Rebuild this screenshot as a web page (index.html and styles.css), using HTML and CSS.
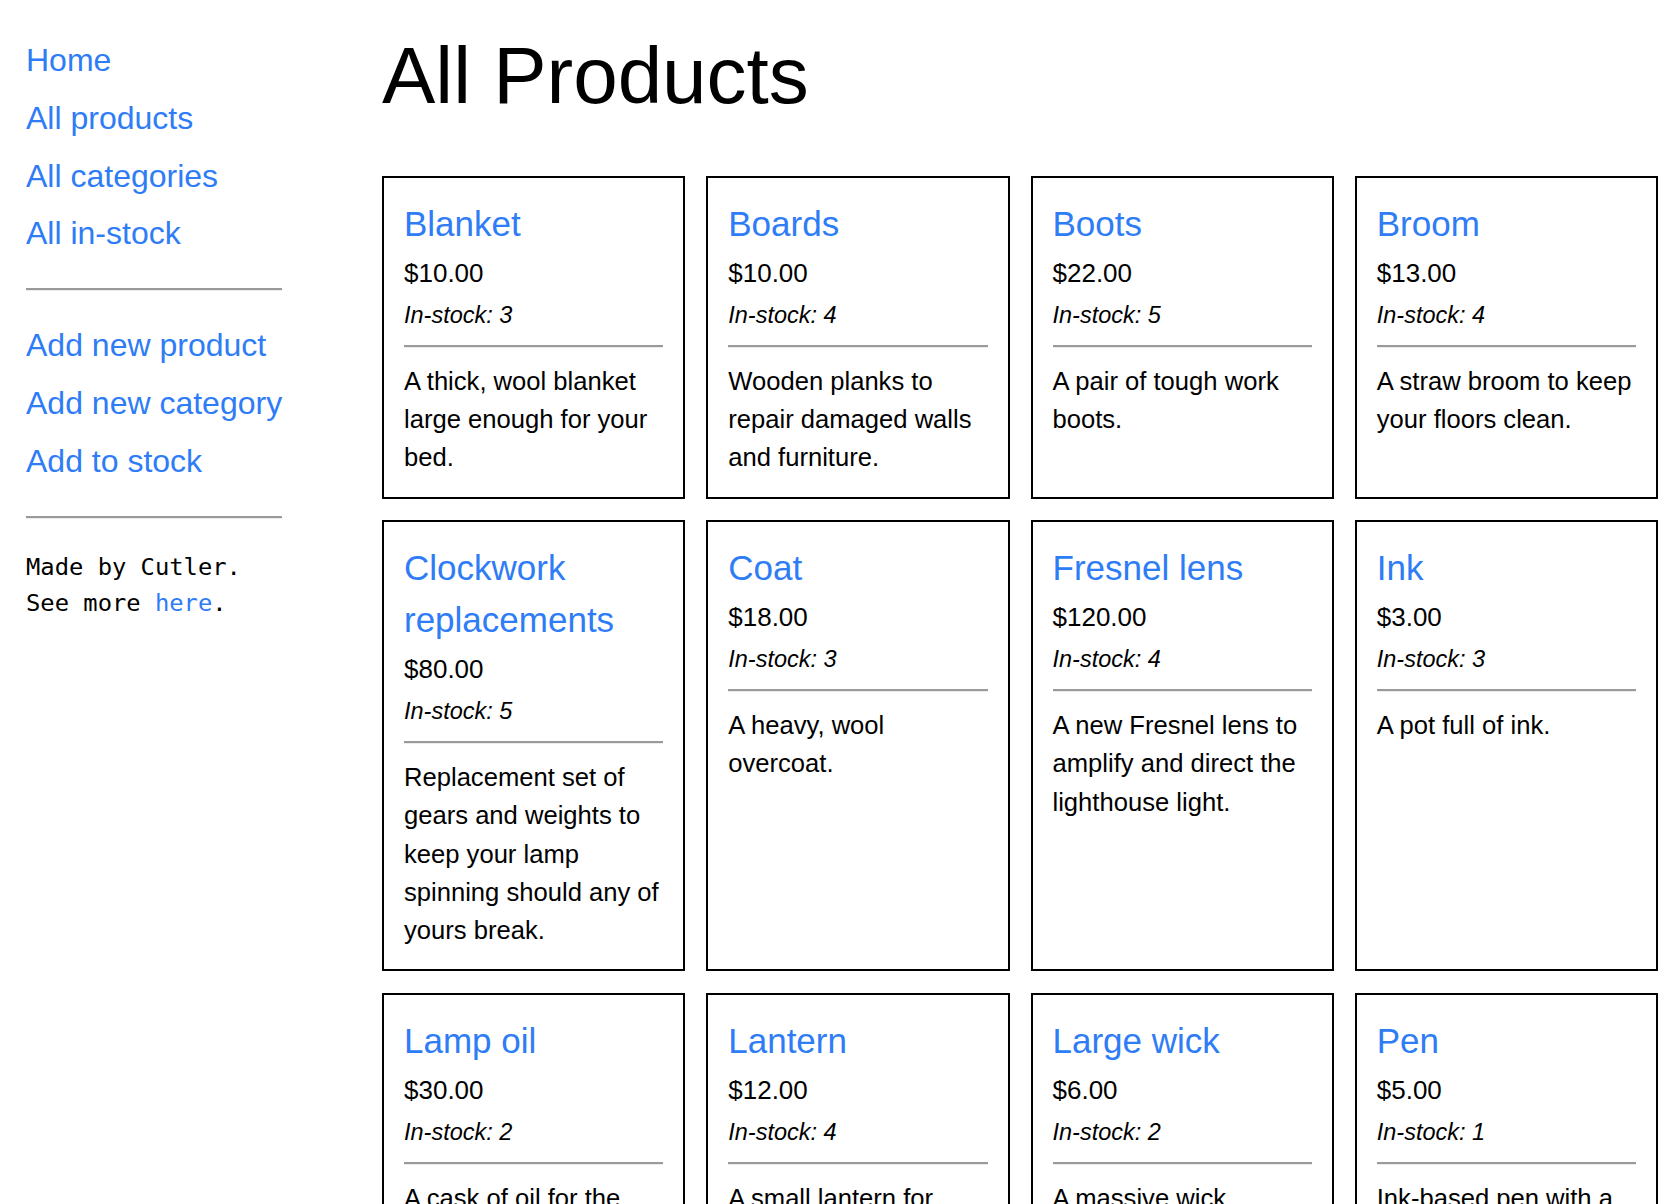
FILE: index.html
```html
<!DOCTYPE html>
<html lang="en">
<head>
<meta charset="utf-8">
<title>All Products</title>
<link rel="stylesheet" href="styles.css">
</head>
<body>
<aside class="sidebar">
  <nav class="nav">
    <a href="#">Home</a>
    <a href="#">All products</a>
    <a href="#">All categories</a>
    <a href="#">All in-stock</a>
  </nav>
  <hr class="rule side-rule">
  <nav class="nav">
    <a href="#">Add new product</a>
    <a href="#">Add new category</a>
    <a href="#">Add to stock</a>
  </nav>
  <hr class="rule side-rule">
  <p class="credit">Made by Cutler.<br>See more <a href="#">here</a>.</p>
</aside>
<main class="main">
  <h1 class="title">All Products</h1>
  <div class="grid">
    <article class="card">
      <a class="name" href="#">Blanket</a>
      <div class="price">$10.00</div>
      <div class="stock">In-stock: 3</div>
      <hr class="rule card-rule">
      <p class="desc">A thick, wool blanket large enough for your bed.</p>
    </article>
    <article class="card">
      <a class="name" href="#">Boards</a>
      <div class="price">$10.00</div>
      <div class="stock">In-stock: 4</div>
      <hr class="rule card-rule">
      <p class="desc">Wooden planks to repair damaged walls and furniture.</p>
    </article>
    <article class="card">
      <a class="name" href="#">Boots</a>
      <div class="price">$22.00</div>
      <div class="stock">In-stock: 5</div>
      <hr class="rule card-rule">
      <p class="desc">A pair of tough work boots.</p>
    </article>
    <article class="card">
      <a class="name" href="#">Broom</a>
      <div class="price">$13.00</div>
      <div class="stock">In-stock: 4</div>
      <hr class="rule card-rule">
      <p class="desc">A straw broom to keep your floors clean.</p>
    </article>
    <article class="card">
      <a class="name" href="#">Clockwork replacements</a>
      <div class="price">$80.00</div>
      <div class="stock">In-stock: 5</div>
      <hr class="rule card-rule">
      <p class="desc">Replacement set of gears and weights to keep your lamp spinning should any of yours break.</p>
    </article>
    <article class="card">
      <a class="name" href="#">Coat</a>
      <div class="price">$18.00</div>
      <div class="stock">In-stock: 3</div>
      <hr class="rule card-rule">
      <p class="desc">A heavy, wool overcoat.</p>
    </article>
    <article class="card">
      <a class="name" href="#">Fresnel lens</a>
      <div class="price">$120.00</div>
      <div class="stock">In-stock: 4</div>
      <hr class="rule card-rule">
      <p class="desc">A new Fresnel lens to amplify and direct the lighthouse light.</p>
    </article>
    <article class="card">
      <a class="name" href="#">Ink</a>
      <div class="price">$3.00</div>
      <div class="stock">In-stock: 3</div>
      <hr class="rule card-rule">
      <p class="desc">A pot full of ink.</p>
    </article>
    <article class="card">
      <a class="name" href="#">Lamp oil</a>
      <div class="price">$30.00</div>
      <div class="stock">In-stock: 2</div>
      <hr class="rule card-rule">
      <p class="desc">A cask of oil for the lighthouse lamp.</p>
    </article>
    <article class="card">
      <a class="name" href="#">Lantern</a>
      <div class="price">$12.00</div>
      <div class="stock">In-stock: 4</div>
      <hr class="rule card-rule">
      <p class="desc">A small lantern for carrying light on dark nights.</p>
    </article>
    <article class="card">
      <a class="name" href="#">Large wick</a>
      <div class="price">$6.00</div>
      <div class="stock">In-stock: 2</div>
      <hr class="rule card-rule">
      <p class="desc">A massive wick designed for the lighthouse lamp.</p>
    </article>
    <article class="card">
      <a class="name" href="#">Pen</a>
      <div class="price">$5.00</div>
      <div class="stock">In-stock: 1</div>
      <hr class="rule card-rule">
      <p class="desc">Ink-based pen with a steel nib.</p>
    </article>
  </div>
</main>
</body>
</html>
```

FILE: styles.css
```css
html, body {
  margin: 0;
  padding: 0;
  background: #ffffff;
}

body {
  display: flex;
  align-items: flex-start;
  font-family: "Liberation Sans", Arial, Helvetica, sans-serif;
  color: #000000;
}

a {
  color: #2e7cf6;
  text-decoration: none;
}

.sidebar {
  flex: none;
  width: 256px;
  padding: 32px 0 0 26px;
}

.nav {
  display: flex;
  flex-direction: column;
}

.nav a {
  display: block;
  font-size: 32px;
  line-height: 57.8px;
  white-space: nowrap;
}

.rule {
  display: block;
  height: 0;
  margin: 0;
  border: none;
  border-top: 2px solid #9a9a9a;
  border-bottom: 1px solid #ececec;
}

.side-rule {
  width: 256px;
  margin: 25px 0 26px;
}

.credit {
  margin: 30px 0 0;
  font-family: "DejaVu Sans Mono", "Liberation Mono", monospace;
  font-size: 23.8px;
  line-height: 36px;
}

.main {
  flex: 1;
  min-width: 0;
  margin: 0 14px 0 100px;
  padding-top: 30px;
}

.title {
  margin: 0;
  font-size: 80px;
  font-weight: normal;
  line-height: 92px;
}

.grid {
  display: grid;
  grid-template-columns: repeat(4, 1fr);
  column-gap: 21px;
  row-gap: 21.5px;
  margin-top: 54px;
}

.card {
  border: 2px solid #000000;
  padding: 20px;
  min-width: 0;
}

.name {
  display: block;
  font-size: 35px;
  line-height: 52px;
}

.price {
  margin-top: 4px;
  font-size: 26px;
  line-height: 39px;
}

.stock {
  margin-top: 5px;
  font-size: 23.5px;
  font-style: italic;
  line-height: 34px;
}

.card-rule {
  margin: 13px 0 14px;
}

.desc {
  margin: 0;
  font-size: 25.6px;
  line-height: 38.2px;
}
```
